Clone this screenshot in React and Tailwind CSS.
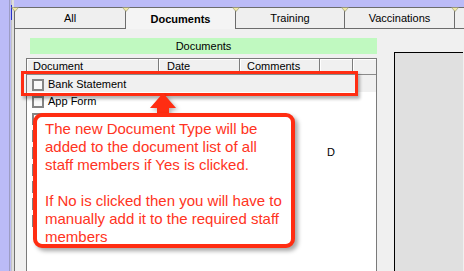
import React from 'react';

const tabs = [
  { label: 'All', w: 'w-[111px]' },
  { label: 'Documents', w: 'w-[110px]', active: true },
  { label: 'Training', w: 'w-[109px]' },
  { label: 'Vaccinations', w: 'w-[110px]' },
];

const rows = ['Bank Statement', 'App Form', '', '', '', '', '', '', ''];

function Corner() {
  return (
    <svg className="absolute -left-[4px] -top-px" width="8" height="5" viewBox="0 0 8 5">
      <polygon points="0.5,0.5 7.5,0.5 4,4.5" fill="#f2eaa6" stroke="#8a8a70" strokeWidth="0.6" />
    </svg>
  );
}

function Tab({ label, w, active }) {
  return (
    <div
      className={`${w} relative shrink-0 border-l border-t border-[#6c6c6c] flex items-center justify-center text-[11px] text-black ${
        active ? 'bg-[#f4f4f4] font-bold text-[11.5px]' : 'bg-[#efefef] border-b'
      }`}
    >
      <Corner />
      <span className="mt-[1px]">{label}</span>
    </div>
  );
}

function HeaderCell({ w, pl, children }) {
  return (
    <div className={`${w} ${pl} shrink-0 h-full border-r border-[#7c7c7c] shadow-[inset_1px_1px_0_#ffffff] flex items-center text-[11px] text-black`}>
      {children}
    </div>
  );
}

export default function App() {
  return (
    <div className="w-[464px] h-[271px] overflow-hidden relative bg-[#bbbbf7] flex font-['Liberation_Sans',Arial,sans-serif]">
      {/* window frame on the left */}
      <div className="w-[9px] shrink-0" />
      <div className="w-px shrink-0 bg-[#9c9cc4]" />
      <div className="w-px shrink-0" />
      <div className="w-px shrink-0 bg-[#c4c4c4] flex flex-col">
        <div className="mt-[5px] h-[15px] bg-[#2a34c8]" />
      </div>
      <div className="w-[2px] shrink-0 bg-[#dedede]" />

      <div className="flex-1 flex flex-col min-w-0">
        <div className="h-[7px] shrink-0" />
        {/* tab strip */}
        <div className="flex h-[22px] shrink-0">
          {tabs.map((t) => (
            <Tab key={t.label} {...t} />
          ))}
          <div className="relative flex-1 border-l border-t border-b border-[#6c6c6c] bg-[#efefef]">
            <Corner />
          </div>
        </div>

        {/* panel */}
        <div className="flex-1 bg-[#f0f0f0] border-l border-[#707070] flex pl-[11px] min-h-0">
          <div className="w-[351px] shrink-0 flex flex-col">
            <div className="ml-[4px] mt-[9px] h-[16px] bg-[#c0f9c0] flex items-center justify-center text-[11px] text-black">
              Documents
            </div>
            <div className="mt-[4px] flex-1 border-l border-r border-t border-[#7a7a7a] bg-white flex flex-col">
              <div className="h-[16px] flex border-b border-[#8a8a8a] bg-[#f0f0f0]">
                <HeaderCell w="w-[132px]" pl="pl-[6px]">Document</HeaderCell>
                <HeaderCell w="w-[81px]" pl="pl-[8px]">Date</HeaderCell>
                <HeaderCell w="w-[80px]" pl="pl-[7px]">Comments</HeaderCell>
                <HeaderCell w="w-[33px]" pl="pl-0" />
                <div className="flex-1 h-full shadow-[inset_1px_1px_0_#ffffff]" />
              </div>
              {rows.map((name, i) => (
                <div
                  key={i}
                  className={`h-[17px] shrink-0 flex text-[11px] text-black ${i === 0 ? 'bg-[#f0f0f0]' : ''}`}
                >
                  <div className="w-[292px] shrink-0 flex items-center pl-[5px] pt-[2px]">
                    <div className="w-[12px] h-[12px] border-2 border-[#858585] bg-[#fafafa] shrink-0" />
                    <span className="ml-[4px]">{name}</span>
                  </div>
                  {i === 4 && <div className="pl-[8px] pt-[4px] leading-none">D</div>}
                </div>
              ))}
            </div>
          </div>
          <div className="ml-[17px] mt-[23px] w-[69px] shrink-0 bg-[#e0e0e0] border-l border-t border-black" />
        </div>
      </div>

      {/* annotation: highlight box */}
      <div className="absolute left-[21px] top-[71px] w-[337px] h-[25px] border-[3px] border-[#ff2d12] shadow-[2px_3px_3px_rgba(0,0,0,0.3)]" />

      {/* annotation: arrow */}
      <svg className="absolute left-[148px] top-[91px] drop-shadow-[2px_2px_2px_rgba(0,0,0,0.3)]" width="30" height="28" viewBox="0 0 30 28">
        <polygon points="15,2 2,17 9,17 9,28 21,28 21,17 28,17" fill="#ff2d12" />
      </svg>

      {/* annotation: callout */}
      <div className="absolute left-[33px] top-[113px] w-[262px] h-[135px] bg-white border-4 border-[#ff2d12] rounded-[9px] shadow-[3px_3px_4px_rgba(0,0,0,0.35)] pl-[8px] pt-[3px] text-[15px] leading-[18px] text-[#ff3322] whitespace-nowrap">
        The new Document Type will be
        <br />
        added to the document list of all
        <br />
        staff members if Yes is clicked.
        <br />
        <br />
        If No is clicked then you will have to
        <br />
        manually add it to the required staff
        <br />
        members
      </div>
    </div>
  );
}
